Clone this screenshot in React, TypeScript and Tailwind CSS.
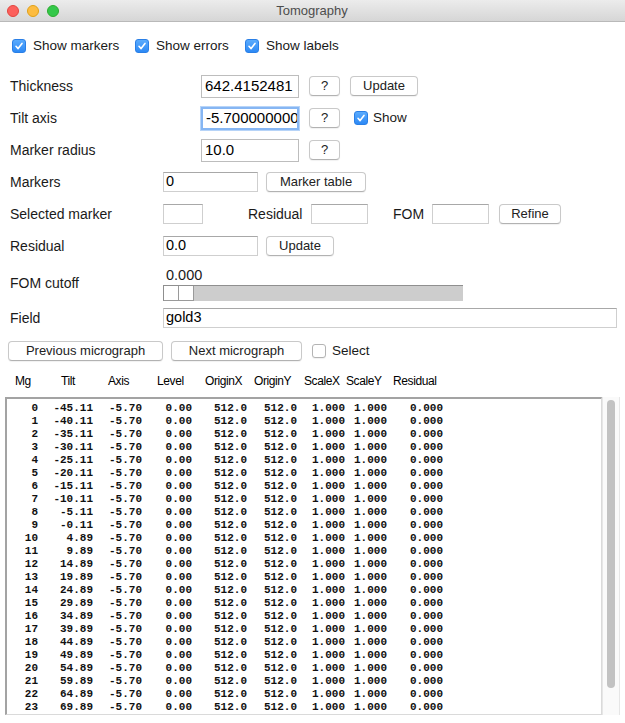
import React from 'react';

const sans = { fontFamily: '"Liberation Sans", Arial, sans-serif' };

const Check = ({ on }: { on: boolean }) =>
  on ? (
    <span className="flex h-[14px] w-[14px] shrink-0 items-center justify-center rounded-[3px] bg-gradient-to-b from-[#5aabfd] to-[#2c89f5] border border-[#2a7fe6]">
      <svg width="10" height="10" viewBox="0 0 10 10">
        <path d="M2 5.3 L4.1 7.6 L8 2.4" fill="none" stroke="white" strokeWidth="1.6" strokeLinecap="round" strokeLinejoin="round" />
      </svg>
    </span>
  ) : (
    <span className="h-[14px] w-[14px] shrink-0 rounded-[3px] border border-[#b4b4b4] bg-white shadow-[0_1px_1px_rgba(0,0,0,0.06)]" />
  );

const Btn = ({ children, w }: { children: React.ReactNode; w: string }) => (
  <div
    className={`${w} flex h-[20px] shrink-0 items-center justify-center rounded-[4px] border border-[#c9c9c9] border-b-[#b2b2b2] bg-white text-[13px] text-[#222] shadow-[0_1px_1px_rgba(0,0,0,0.06)]`}
  >
    {children}
  </div>
);

const Entry = ({ value, w }: { value?: string; w: string }) => (
  <div
    className={`${w} flex h-[20px] shrink-0 items-center overflow-hidden whitespace-nowrap border border-[#cfcfcf] border-t-[#a8a8a8] bg-white pl-[2px] text-[14.5px] text-black`}
  >
    {value}
  </div>
);

const BigEntry = ({ value, focus }: { value: string; focus?: boolean }) => (
  <div
    className={clsx_(
      'flex h-[23px] w-[98px] shrink-0 items-center overflow-hidden whitespace-nowrap bg-white pl-[3px] text-[15px] text-black',
      focus ? 'border-2 border-[#86b6f3] shadow-[0_0_0_1px_#b7d4f8]' : 'border border-[#bdbdbd]'
    )}
  >
    {value}
  </div>
);

function clsx_(...c: string[]) {
  return c.join(' ');
}

const headers: [string, string][] = [
  ['Mg', 'w-[46px]'],
  ['Tilt', 'w-[47px]'],
  ['Axis', 'w-[49px]'],
  ['Level', 'w-[48px]'],
  ['OriginX', 'w-[49px]'],
  ['OriginY', 'w-[50px]'],
  ['ScaleX', 'w-[42px]'],
  ['ScaleY', 'w-[47px]'],
  ['Residual', 'w-[60px]']
];

const colW = ['w-[31px]', 'w-[55px]', 'w-[49px]', 'w-[50px]', 'w-[55px]', 'w-[50px]', 'w-[48px]', 'w-[42px]', 'w-[56px]'];

const rows = Array.from({ length: 24 }, (_, i) => [
  String(i),
  (-45.11 + 5 * i).toFixed(2),
  '-5.70',
  '0.00',
  '512.0',
  '512.0',
  '1.000',
  '1.000',
  '0.000'
]);

export default function App() {
  return (
    <div className="h-[723px] w-[625px] overflow-hidden bg-white text-[#1a1a1a]" style={sans}>
      {/* title bar */}
      <div className="relative flex h-[22px] items-center border-b border-[#b9b9b9] bg-gradient-to-b from-[#ececec] to-[#d6d6d6]">
        <div className="flex items-center gap-[8px] pl-[7px]">
          <span className="h-[12px] w-[12px] rounded-full border border-[#e2463f] bg-[#fc605c]" />
          <span className="h-[12px] w-[12px] rounded-full border border-[#e1a116] bg-[#fdbc40]" />
          <span className="h-[12px] w-[12px] rounded-full border border-[#2dac2f] bg-[#34c84a]" />
        </div>
        <div className="flex-1 pr-[60px] text-center text-[13px] text-[#4d4d4d]">Tomography</div>
      </div>

      {/* options */}
      <div className="mt-[13px] flex h-[22px] items-center pl-[12px] text-[13.5px]">
        <div className="flex w-[123px] items-center gap-[7px]">
          <Check on />
          <span>Show markers</span>
        </div>
        <div className="flex w-[110px] items-center gap-[7px]">
          <Check on />
          <span>Show errors</span>
        </div>
        <div className="flex items-center gap-[7px]">
          <Check on />
          <span>Show labels</span>
        </div>
      </div>

      <div className="mt-[13px] text-[14px]">
        <div className="flex h-[32px] items-center pl-[10px]">
          <span className="w-[191px]">Thickness</span>
          <BigEntry value="642.4152481" />
          <div className="ml-[10px]"><Btn w="w-[31px]">?</Btn></div>
          <div className="ml-[10px]"><Btn w="w-[68px]">Update</Btn></div>
        </div>
        <div className="flex h-[32px] items-center pl-[10px]">
          <span className="w-[191px]">Tilt axis</span>
          <BigEntry value="-5.7000000000" focus />
          <div className="ml-[10px]"><Btn w="w-[31px]">?</Btn></div>
          <div className="ml-[14px] flex items-center gap-[5px] text-[13.5px]">
            <Check on />
            <span>Show</span>
          </div>
        </div>
        <div className="flex h-[32px] items-center pl-[10px]">
          <span className="w-[191px]">Marker radius</span>
          <BigEntry value="10.0" />
          <div className="ml-[10px]"><Btn w="w-[31px]">?</Btn></div>
        </div>

        <div className="flex h-[32px] items-center pl-[10px]">
          <span className="w-[153px]">Markers</span>
          <Entry w="w-[95px]" value="0" />
          <div className="ml-[8px]"><Btn w="w-[100px]">Marker table</Btn></div>
        </div>
        <div className="flex h-[32px] items-center pl-[10px]">
          <span className="w-[153px]">Selected marker</span>
          <Entry w="w-[40px]" />
          <span className="ml-[45px] w-[63px]">Residual</span>
          <Entry w="w-[57px]" />
          <span className="ml-[25px] w-[39px]">FOM</span>
          <Entry w="w-[57px]" />
          <div className="ml-[10px]"><Btn w="w-[62px]">Refine</Btn></div>
        </div>
        <div className="flex h-[32px] items-center pl-[10px]">
          <span className="w-[153px]">Residual</span>
          <Entry w="w-[95px]" value="0.0" />
          <div className="ml-[8px]"><Btn w="w-[68px]">Update</Btn></div>
        </div>

        <div className="flex h-[42px] items-center pl-[10px]">
          <span className="w-[153px]">FOM cutoff</span>
          <div className="flex flex-col self-stretch pt-[6px]">
            <span className="h-[14px] pl-[3px] text-[14.5px] leading-[14px]">0.000</span>
            <div className="mt-[3px] flex h-[16px] w-[300px] border-l border-t border-[#8f8f8f] bg-[#cdcdcd]">
              <span className="h-[15px] w-[15px] border-b border-r border-[#9a9a9a] bg-white" />
              <span className="h-[15px] w-[15px] border-b border-r border-[#9a9a9a] bg-white" />
            </div>
          </div>
        </div>

        <div className="flex h-[28px] items-center pl-[10px]">
          <span className="w-[153px]">Field</span>
          <Entry w="w-[454px]" value="gold3" />
        </div>
      </div>

      <div className="mt-[9px] flex h-[20px] items-center pl-[8px]">
        <Btn w="w-[155px]">Previous micrograph</Btn>
        <div className="ml-[8px]"><Btn w="w-[131px]">Next micrograph</Btn></div>
        <div className="ml-[10px] flex items-center gap-[6px] text-[13.5px]">
          <Check on={false} />
          <span>Select</span>
        </div>
      </div>

      <div className="mt-[11px] flex h-[18px] items-center pl-[15px] text-[12px] tracking-[-0.4px] text-black">
        {headers.map(([h, w]) => (
          <span key={h} className={`${w} shrink-0`}>
            {h}
          </span>
        ))}
      </div>

      <div className="mt-[7px] flex h-[318px] pl-[5px]">
        <div className="h-[318px] w-[597px] overflow-hidden border-l-2 border-t-2 border-b border-r border-[#a3a3a3] border-b-[#dadada] border-r-[#dadada] bg-white pt-[3px]">
          {rows.map((r) => (
            <div
              key={r[0]}
              className="flex h-[13px] whitespace-pre text-[11px] font-bold leading-[13px] text-[#111]"
              style={{ fontFamily: '"Liberation Mono", "Courier New", monospace' }}
            >
              {r.map((v, j) => (
                <span key={j} className={`${colW[j]} shrink-0 text-right`}>
                  {v}
                </span>
              ))}
            </div>
          ))}
        </div>
        <div className="h-[318px] w-[18px] border-l border-r border-[#e6e6e6] bg-[#fafafa] pl-[4px] pt-[3px]">
          <div className="h-[288px] w-[8px] rounded-full bg-[#c2c2c2]" />
        </div>
      </div>
    </div>
  );
}
